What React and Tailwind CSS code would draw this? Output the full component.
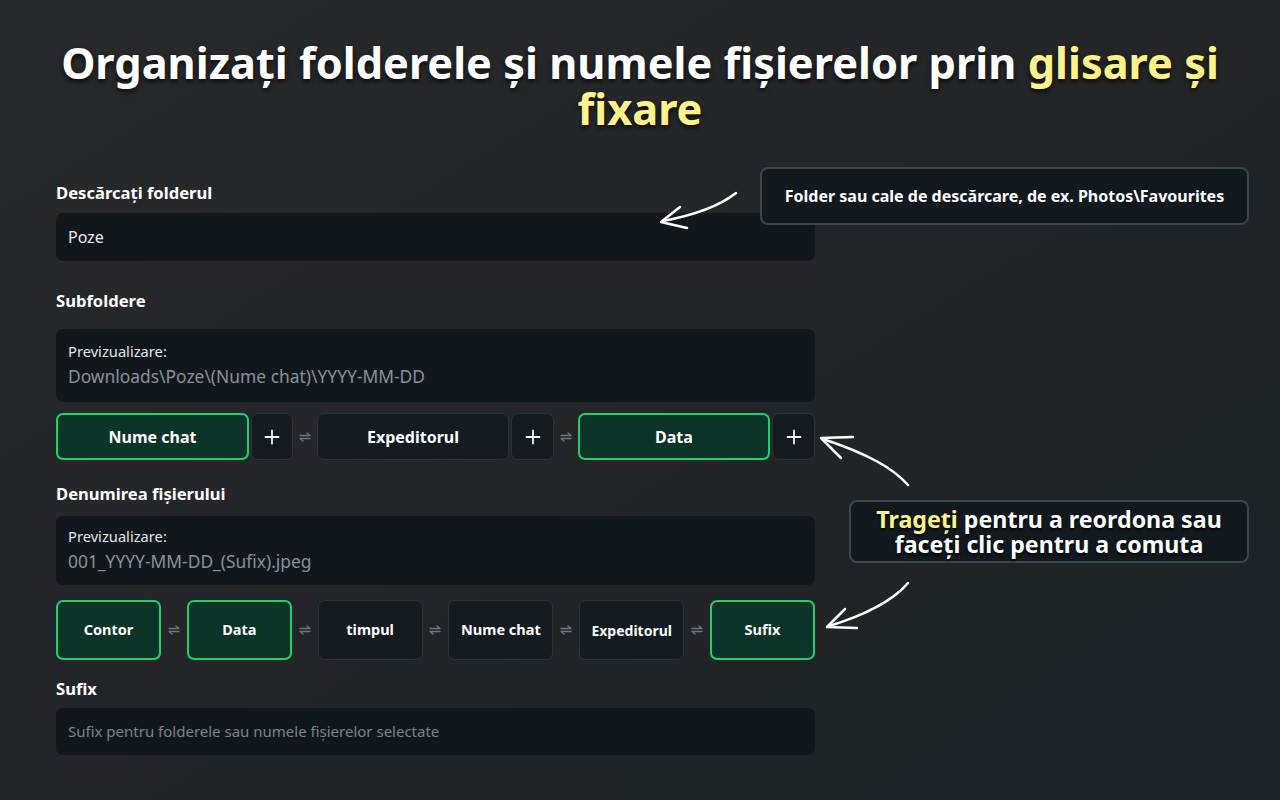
import React from "react";

const font = { fontFamily: '"Noto Sans", "Open Sans", sans-serif' };

function Swap() {
  return (
    <svg width="12" height="12" viewBox="0 0 12 12" fill="none" stroke="#6f767c" strokeWidth="1.3" strokeLinecap="round" strokeLinejoin="round">
      <path d="M1 4.5H11L8 2" />
      <path d="M11 7.5H1L4 10" />
    </svg>
  );
}

function Chip({ label, active, className = "", textClass = "text-[16px]" }) {
  return (
    <div
      className={
        "flex items-center justify-center rounded-[7px] font-bold text-white " +
        textClass +
        " " +
        (active
          ? "bg-[#0d3429] border-2 border-[#1fd16c]"
          : "bg-[#141b21] border border-[#2d3439]") +
        " " +
        className
      }
    >
      {label}
    </div>
  );
}

function Plus({ className = "" }) {
  return (
    <div className={"flex items-center justify-center rounded-[7px] bg-[#141b21] border border-[#2d3439] " + className}>
      <svg width="16" height="16" viewBox="0 0 16 16" stroke="#f2f2f2" strokeWidth="1.8" strokeLinecap="round">
        <path d="M8 1.5V14.5M1.5 8H14.5" />
      </svg>
    </div>
  );
}

function SwapGap({ className = "" }) {
  return (
    <div className={"flex items-center justify-center " + className}>
      <Swap />
    </div>
  );
}

export default function App() {
  return (
    <div
      className="relative w-full h-[800px] overflow-hidden bg-linear-to-br from-[#28292b] via-[#232528] to-[#1c2326] text-white"
      style={font}
    >
      <h1 className="pt-[40px] text-center text-[43.3px] leading-[46px] font-bold text-white [text-shadow:0_3px_5px_rgba(0,0,0,0.7)] px-[40px]">
        Organizați folderele și numele fișierelor prin{" "}
        <span className="text-[#fdf38a]">glisare și fixare</span>
      </h1>

      <div className="ml-[56px] w-[759px] flex flex-col">
        <div className="mt-[49px] h-[24px] leading-[24px] text-[16.6px] font-bold">Descărcați folderul</div>
        <div className="mt-[8px] h-[48px] rounded-[7px] bg-[#11181d] flex items-center px-[12px] text-[16px] text-[#e8eaec]">
          Poze
        </div>

        <div className="mt-[28px] h-[24px] leading-[24px] text-[16.6px] font-bold">Subfoldere</div>
        <div className="mt-[16px] h-[73px] rounded-[7px] bg-[#11181d] flex flex-col px-[12px] pt-[11px]">
          <div className="text-[14.7px] leading-[22px] text-[#e3e5e7]">Previzualizare:</div>
          <div className="text-[17.4px] leading-[28px] text-[#8b9196]">Downloads\Poze\(Nume chat)\YYYY-MM-DD</div>
        </div>

        <div className="mt-[11px] h-[47px] flex">
          <Chip label="Nume chat" active className="w-[193px]" />
          <Plus className="ml-[2px] w-[42px]" />
          <SwapGap className="w-[24px]" />
          <Chip label="Expeditorul" className="w-[192px]" />
          <Plus className="ml-[2px] w-[43px]" />
          <SwapGap className="w-[24px]" />
          <Chip label="Data" active className="w-[192px]" />
          <Plus className="ml-[2px] w-[43px]" />
        </div>

        <div className="mt-[22px] h-[24px] leading-[24px] text-[16.6px] font-bold">Denumirea fișierului</div>
        <div className="mt-[10px] h-[69px] rounded-[7px] bg-[#11181d] flex flex-col px-[12px] pt-[9px]">
          <div className="text-[14.7px] leading-[22px] text-[#e3e5e7]">Previzualizare:</div>
          <div className="text-[17.4px] leading-[28px] text-[#8b9196]">001_YYYY-MM-DD_(Sufix).jpeg</div>
        </div>

        <div className="mt-[15px] h-[60px] flex justify-between">
          <Chip label="Contor" active className="w-[105px]" textClass="text-[14.5px]" />
          <SwapGap className="flex-1" />
          <Chip label="Data" active className="w-[105px]" textClass="text-[14.5px]" />
          <SwapGap className="flex-1" />
          <Chip label="timpul" className="w-[105px]" textClass="text-[14.5px]" />
          <SwapGap className="flex-1" />
          <Chip label="Nume chat" className="w-[105px]" textClass="text-[14.5px]" />
          <SwapGap className="flex-1" />
          <Chip label="Expeditorul" className="w-[105px]" textClass="text-[14px]" />
          <SwapGap className="flex-1" />
          <Chip label="Sufix" active className="w-[105px]" textClass="text-[14.5px]" />
        </div>

        <div className="mt-[17px] h-[24px] leading-[24px] text-[16.6px] font-bold">Sufix</div>
        <div className="mt-[7px] h-[47px] rounded-[7px] bg-[#11181d] flex items-center px-[12px] text-[15px] text-[#7c8288]">
          Sufix pentru folderele sau numele fișierelor selectate
        </div>
      </div>

      {/* Callout 1 */}
      <div className="absolute left-[760px] top-[167px] w-[489px] h-[58px] rounded-[8px] border-2 border-[#3a474e] bg-[#131a1f] flex items-center justify-center text-[16px] font-bold text-white whitespace-nowrap">
        Folder sau cale de descărcare, de ex. Photos\Favourites
      </div>

      {/* Callout 2 */}
      <div className="absolute left-[849px] top-[500px] w-[400px] h-[63px] rounded-[8px] border-2 border-[#3a474e] bg-[#131a1f] flex items-center justify-center text-center text-[23.2px] leading-[25px] font-bold text-white [text-shadow:0_2px_3px_rgba(0,0,0,0.8)] whitespace-nowrap">
        <div>
          <span className="text-[#fdf38a]">Trageți</span> pentru a reordona sau
          <br />
          faceți clic pentru a comuta
        </div>
      </div>

      {/* Arrows */}
      <svg className="absolute inset-0 pointer-events-none" width="1280" height="800" fill="none" stroke="#ffffff" strokeWidth="2.5" strokeLinecap="round" strokeLinejoin="round">
        <path d="M736 193 C 722 204, 700 214, 663 221" />
        <path d="M680 207 L661 222 L687 228" />
        <path d="M908 485 C 893 468, 868 454, 823 439" />
        <path d="M853 437 L821 438 L841 458" />
        <path d="M908 583 C 893 601, 862 616, 829 626" />
        <path d="M845 609 L827 627 L857 628" />
      </svg>
    </div>
  );
}
